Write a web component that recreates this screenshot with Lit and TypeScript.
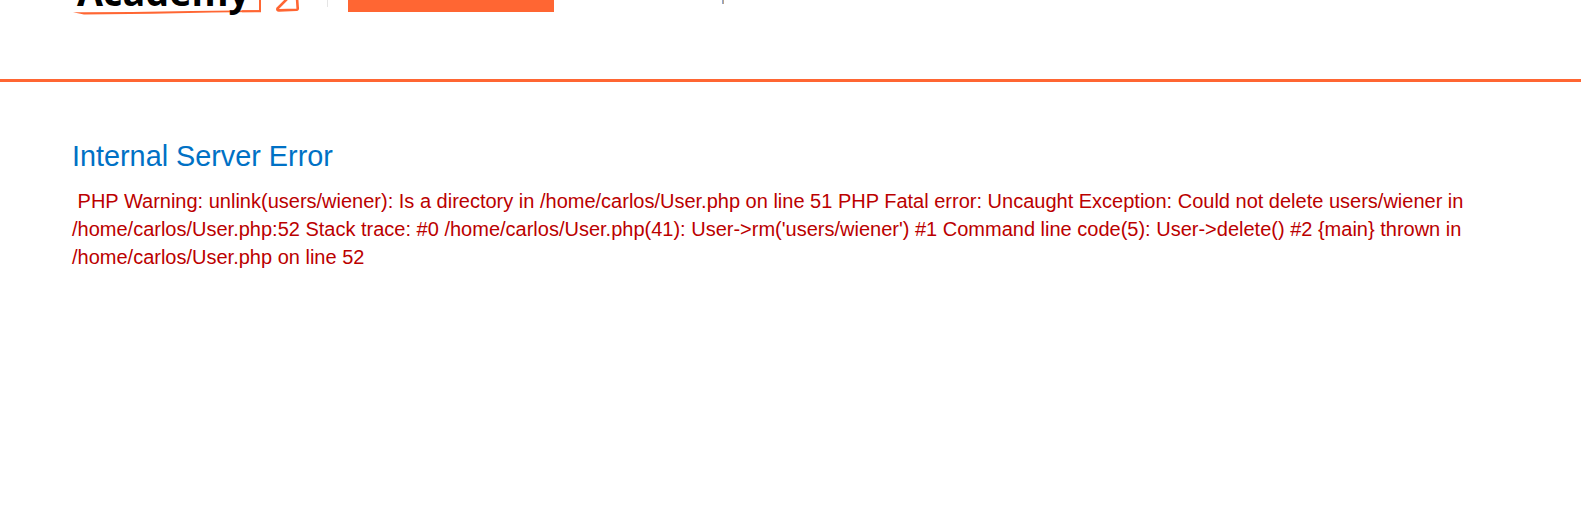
import { LitElement, html, css } from "lit";
import { customElement } from "lit/decorators.js";

@customElement("lab-header")
class LabHeader extends LitElement {
  static styles = css`
    :host { display: flex; box-sizing: border-box; height: 82px; align-items: flex-start; padding-left: 72px; border-bottom: 3px solid #ff6633; }
    .logo { display: block; width: 230px; height: 20px; flex: none; }
    .word { font: 700 40px "Open Sans", sans-serif; fill: #000; }
    .rule { width: 1px; height: 7px; margin-left: 25px; background: #e5e5e5; }
    .button { width: 206px; height: 12px; margin-left: 20px; background: #ff6633; }
    .tick { width: 2px; height: 4px; margin-left: 168px; background: linear-gradient(90deg, #93a5cb 50%, #b8a58c 50%); }
  `;
  render() {
    return html`
      <svg class="logo" viewBox="0 0 230 20">
        <path d="M1 12.2 L12 12.2 L60 12 L120 10.9 L188 10.2 L188 12 L140 12.6 L80 13.8 L12 14.5 Z" fill="#ff6633" />
        <path d="M188 0V11.2H170" fill="none" stroke="#ff6633" stroke-width="2" />
        <text class="word" x="5" y="6" textLength="173" lengthAdjust="spacingAndGlyphs">Academy</text>
        <path d="M216 -2L205.5 8.5Q204.8 10.5 207 10.4L224.5 9.7Q226 9.5 225.7 8L225 -2" fill="none" stroke="#ff6633" stroke-width="2.6" />
      </svg>
      <span class="rule"></span>
      <span class="button"></span>
      <span class="tick"></span>
    `;
  }
}

@customElement("app-root")
class AppRoot extends LitElement {
  static styles = css`
    :host { display: block; height: 511px; overflow: hidden; background: #fff; font-family: "Liberation Sans", Arial, sans-serif; }
    .content { padding: 57px 72px 0; }
    .title { margin: 0; color: #0071c5; font-size: 28.8px; font-weight: 400; line-height: 34px; }
    .message { margin: 14px 0 0; color: #bb0000; font-size: 20px; line-height: 28px; }
  `;
  render() {
    return html`
      <lab-header></lab-header>
      <main class="content">
        <h4 class="title">Internal Server Error</h4>
        <p class="message">&nbsp;PHP Warning: unlink(users/wiener): Is a directory in /home/carlos/User.php on line 51 PHP Fatal error: Uncaught Exception: Could not delete users/wiener in /home/carlos/User.php:52 Stack trace: #0 /home/carlos/User.php(41): User-&gt;rm('users/wiener') #1 Command line code(5): User-&gt;delete() #2 {main} thrown in /home/carlos/User.php on line 52</p>
      </main>
    `;
  }
}
